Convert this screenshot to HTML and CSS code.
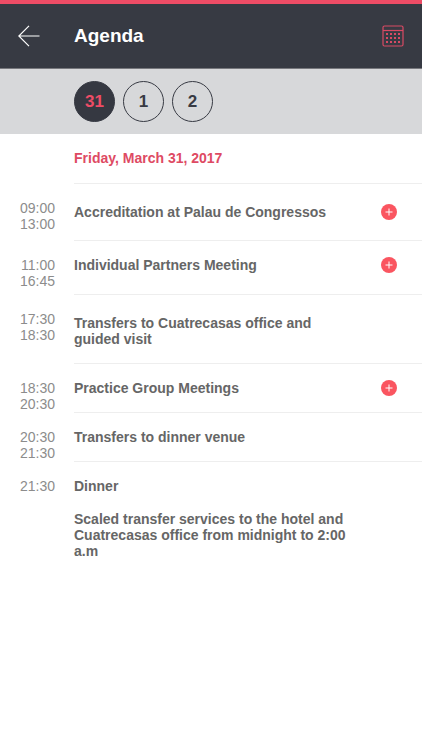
FILE: index.html
```html
<!DOCTYPE html>
<html lang="en">
<head>
<meta charset="utf-8">
<meta name="viewport" content="width=device-width, initial-scale=1">
<title>Agenda</title>
<link rel="stylesheet" href="styles.css">
</head>
<body>
<header class="topbar">
  <a class="back" href="#" aria-label="Back">
    <svg width="22" height="22" viewBox="0 0 22 22" fill="none" stroke="currentColor" stroke-width="1.2"><path d="M11 .8.8 11 11 21.200M.8 11H21.500"/></svg>
  </a>
  <h1 class="title">Agenda</h1>
  <button class="calendar" type="button" aria-label="Calendar">
    <svg width="22" height="22" viewBox="0 0 22 22" fill="none" stroke="currentColor" stroke-width="1.200"><rect x="1" y="1" width="20" height="20" rx="1.500"/><path d="M1 5.500h20"/><path stroke-width="2" stroke-dasharray="2 2" d="M4 9h14M4 13h14M4 17h14"/></svg>
  </button>
</header>
<nav class="days" aria-label="Days">
  <button class="day day-active" type="button" aria-pressed="true">31</button>
  <button class="day" type="button" aria-pressed="false">1</button>
  <button class="day" type="button" aria-pressed="false">2</button>
</nav>
<main>
  <h2 class="date">Friday, March 31, 2017</h2>
  <ul class="events">
    <li class="event">
      <div class="time"><time>09:00</time><time>13:00</time></div>
      <div class="detail roomy"><h3 class="name">Accreditation at Palau de Congressos</h3>
        <button class="add" type="button" aria-label="More about Accreditation"><svg width="16" height="16" viewBox="0 0 16 16"><circle cx="8" cy="8" r="8"/><path d="M8 4.500v7M4.500 8h7"/></svg></button></div>
    </li>
    <li class="event">
      <div class="time"><time>11:00</time><time>16:45</time></div>
      <div class="detail medium"><h3 class="name">Individual Partners Meeting</h3>
        <button class="add" type="button" aria-label="More about Individual Partners Meeting"><svg width="16" height="16" viewBox="0 0 16 16"><circle cx="8" cy="8" r="8"/><path d="M8 4.500v7M4.500 8h7"/></svg></button></div>
    </li>
    <li class="event">
      <div class="time"><time>17:30</time><time>18:30</time></div>
      <div class="detail roomy"><h3 class="name">Transfers to Cuatrecasas office and guided visit</h3></div>
    </li>
    <li class="event">
      <div class="time"><time>18:30</time><time>20:30</time></div>
      <div class="detail"><h3 class="name">Practice Group Meetings</h3>
        <button class="add" type="button" aria-label="More about Practice Group Meetings"><svg width="16" height="16" viewBox="0 0 16 16"><circle cx="8" cy="8" r="8"/><path d="M8 4.500v7M4.500 8h7"/></svg></button></div>
    </li>
    <li class="event">
      <div class="time"><time>20:30</time><time>21:30</time></div>
      <div class="detail"><h3 class="name">Transfers to dinner venue</h3></div>
    </li>
    <li class="event">
      <div class="time"><time>21:30</time></div>
      <div class="detail"><div class="name"><h3>Dinner</h3><p class="note">Scaled transfer services to the hotel and Cuatrecasas office from midnight to 2:00 a.m</p></div></div>
    </li>
  </ul>
</main>
</body>
</html>
```
FILE: styles.css
```css
* { box-sizing: border-box; margin: 0; padding: 0; }
body {
  font-family: "Liberation Sans", Arial, sans-serif;
  font-size: 14px;
  line-height: 16px;
  color: #666;
  background: #fff;
}
button { border: 0; background: none; font: inherit; color: inherit; cursor: pointer; }
svg { display: block; }
h3 { font-size: inherit; }

.topbar {
  display: grid;
  grid-template-columns: 56px 1fr auto;
  align-items: center;
  height: 69px;
  padding: 0 18px;
  border-top: 4px solid #ee4c66;
  border-bottom: 1px solid #77787d;
  background: #373a43;
  color: #fff;
}
.back { color: inherit; }
.title { font-size: 19px; line-height: 24px; }
.calendar { color: #d94a64; }

.days {
  display: flex;
  align-items: center;
  gap: 8px;
  height: 65px;
  padding-left: 74px;
  background: #d7d8da;
}
.day {
  width: 41px;
  height: 41px;
  border: 1px solid #373a43;
  border-radius: 50%;
  font-size: 17px;
  font-weight: bold;
  color: #373a43;
}
.day-active { background: #353841; color: #ee4c66; }

.date {
  margin-left: 74px;
  padding: 16px 0 17px;
  border-bottom: 1px solid #eee;
  font-size: 14px;
  color: #de4a63;
}
.events { list-style: none; }
.event { display: grid; grid-template-columns: 74px 1fr; }
.time {
  display: flex;
  flex-direction: column;
  padding: 16px 19px 0 0;
  text-align: right;
  color: #8c8c8c;
}
.detail {
  display: flex;
  align-items: flex-start;
  justify-content: space-between;
  min-height: 49px;
  padding: 16px 25px 16px 0;
  border-bottom: 1px solid #eee;
}
.medium { min-height: 54px; }
.roomy { min-height: 57px; padding-top: 20px; }
.event:last-child .detail { border-bottom: 0; }
.name { max-width: 284px; font-weight: bold; }
.note { margin-top: 17px; }
.add circle { fill: #fa5560; }
.add path { stroke: #fff; stroke-width: 1; }
```
